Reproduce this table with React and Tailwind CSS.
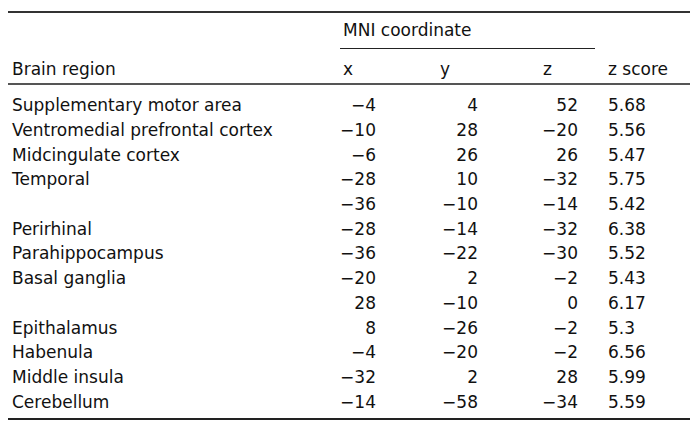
const rows = [
  ["Supplementary motor area", "\u22124", "4", "52", "5.68"],
  ["Ventromedial prefrontal cortex", "\u221210", "28", "\u221220", "5.56"],
  ["Midcingulate cortex", "\u22126", "26", "26", "5.47"],
  ["Temporal", "\u221228", "10", "\u221232", "5.75"],
  ["", "\u221236", "\u221210", "\u221214", "5.42"],
  ["Perirhinal", "\u221228", "\u221214", "\u221232", "6.38"],
  ["Parahippocampus", "\u221236", "\u221222", "\u221230", "5.52"],
  ["Basal ganglia", "\u221220", "2", "\u22122", "5.43"],
  ["", "28", "\u221210", "0", "6.17"],
  ["Epithalamus", "8", "\u221226", "\u22122", "5.3"],
  ["Habenula", "\u22124", "\u221220", "\u22122", "6.56"],
  ["Middle insula", "\u221232", "2", "28", "5.99"],
  ["Cerebellum", "\u221214", "\u221258", "\u221234", "5.59"],
];

export default function App() {
  return (
    <div className="w-[700px] h-[431px] bg-white pt-[11px] px-[8px] text-[#111] font-['DejaVu_Sans',sans-serif] text-[17px]">
      <table className="w-[682px] table-fixed border-collapse border-t-2 border-b-2 border-t-[#333] border-b-[#222]">
        <colgroup>
          <col className="w-[330px]" />
          <col className="w-[100px]" />
          <col className="w-[102px]" />
          <col className="w-[65px]" />
          <col />
        </colgroup>
        <thead>
          <tr className="h-[36px]">
            <th />
            <th colSpan={3} className="p-0 font-normal text-left align-top">
              <div className="ml-[2px] mr-[10px] pl-[3px] pt-[6px] h-[36px] leading-[22px] border-b border-[#222]">
                MNI coordinate
              </div>
            </th>
            <th />
          </tr>
          <tr className="h-[35px] border-b-2 border-[#555]">
            <th className="pl-[4px] font-normal text-left align-middle pt-[7px]">Brain region</th>
            <th className="pl-[5px] font-normal text-left align-middle pt-[7px]">x</th>
            <th className="pl-[2px] font-normal text-left align-middle pt-[7px]">y</th>
            <th className="pl-[3px] font-normal text-left align-middle pt-[7px]">z</th>
            <th className="pl-[3px] font-normal text-left align-middle pt-[7px]">z score</th>
          </tr>
        </thead>
        <tbody>
          <tr className="h-[9px]"><td colSpan={5} /></tr>
          {rows.map((r, i) => (
            <tr key={i} className="h-[24.7px] leading-[20px]">
              <td className="pl-[4px] p-0 whitespace-nowrap">{r[0]}</td>
              <td className="text-right pr-[62px]">{r[1]}</td>
              <td className="text-right pr-[62px]">{r[2]}</td>
              <td className="text-right pr-[27px]">{r[3]}</td>
              <td className="pl-[3px]">{r[4]}</td>
            </tr>
          ))}
          <tr className="h-[5px]"><td colSpan={5} /></tr>
        </tbody>
      </table>
    </div>
  );
}
